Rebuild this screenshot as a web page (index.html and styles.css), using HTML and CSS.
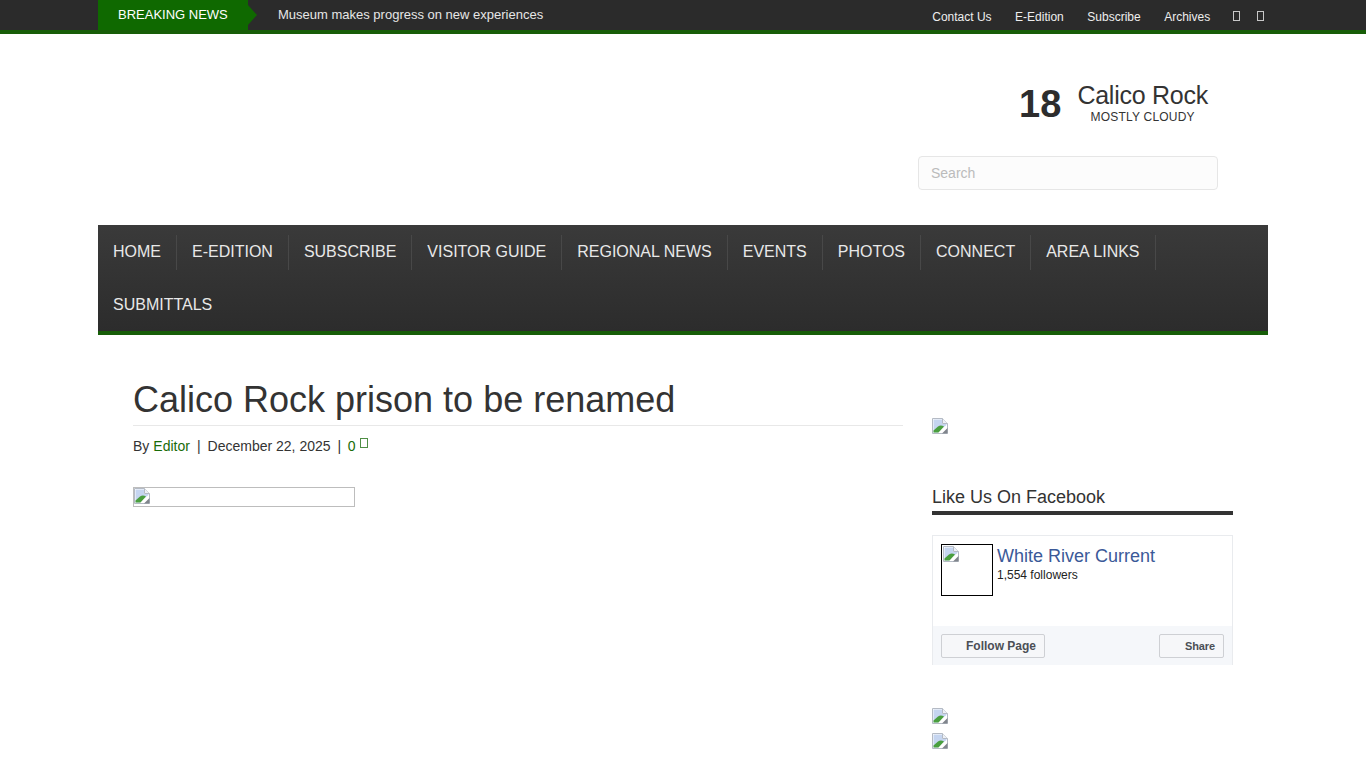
FILE: index.html
```html
<!DOCTYPE html>
<html lang="en">
<head>
  <meta charset="UTF-8" />
  <title>Calico Rock prison to be renamed</title>
  <link rel="stylesheet" href="styles.css">
</head>
<body>
  <svg class="defs" width="0" height="0" aria-hidden="true">
    <symbol id="broken" viewBox="0 0 16 16">
      <path d="M0.5 0.5H10.5L15.5 5.5V15.5H0.5Z" fill="#fff" stroke="#b4bac4"/>
      <path d="M1.5 1.5H10V6H14.5V7L8 12L6 14.5H1.5Z" fill="#c5d5f0"/>
      <path d="M1.5 14.5V12.5L6 8.5C8 7.2 10 7.4 12 8.5L6.5 14.5Z" fill="#4a9f3f"/>
      <path d="M10.5 0.5V5.5H15.5" fill="#eef1f6" stroke="#b4bac4"/>
      <path d="M10 15.5L15.5 10V15.5Z" fill="#80858c"/>
    </symbol>
  </svg>

  <!-- barra superiore -->
  <div class="topbar">
    <div class="wrap topbar-row">
      <div class="breaking">BREAKING NEWS</div>
      <div class="ticker">Museum makes progress on new experiences</div>
      <ul class="toplinks">
        <li><a href="#">Contact Us</a></li>
        <li><a href="#">E-Edition</a></li>
        <li><a href="#">Subscribe</a></li>
        <li><a href="#">Archives</a></li>
        <li class="tofu-item"><span class="tofu"></span></li>
        <li class="tofu-item"><span class="tofu"></span></li>
      </ul>
    </div>
  </div>

  <!-- testata -->
  <header class="wrap masthead">
    <div class="weather">
      <div class="temp">18</div>
      <div class="place">
        <div class="city">Calico Rock</div>
        <div class="sky">MOSTLY CLOUDY</div>
      </div>
    </div>
    <input class="search" type="text" placeholder="Search">
  </header>

  <nav class="wrap mainnav">
    <a href="#">HOME</a>
    <a href="#">E-EDITION</a>
    <a href="#">SUBSCRIBE</a>
    <a href="#">VISITOR GUIDE</a>
    <a href="#">REGIONAL NEWS</a>
    <a href="#">EVENTS</a>
    <a href="#">PHOTOS</a>
    <a href="#">CONNECT</a>
    <a href="#">AREA LINKS</a>
    <a href="#" class="last">SUBMITTALS</a>
  </nav>

  <div class="wrap content">
    <main class="article">
      <h1>Calico Rock prison to be renamed</h1>
      <div class="meta">
        By <a href="#">Editor</a><span class="sep">|</span>December 22, 2025<span class="sep">|</span><a href="#">0</a><span class="tofu small"></span>
      </div>
      <div class="photo"><svg class="broken"><use href="#broken"/></svg></div>
    </main>

    <aside class="sidebar">
      <svg class="broken ad-top"><use href="#broken"/></svg>
      <h3 class="widget-title">Like Us On Facebook</h3>
      <div class="fb">
        <div class="fb-head">
          <div class="fb-pic"><svg class="broken"><use href="#broken"/></svg></div>
          <div>
            <a class="fb-name" href="#">White River Current</a>
            <div class="fb-count">1,554 followers</div>
          </div>
        </div>
        <div class="fb-foot">
          <button class="fb-btn follow">Follow Page</button>
          <button class="fb-btn share">Share</button>
        </div>
      </div>
      <svg class="broken ad-one"><use href="#broken"/></svg>
      <svg class="broken ad-two"><use href="#broken"/></svg>
    </aside>
  </div>
</body>
</html>
```

FILE: styles.css
```css
/* base */
body {
  margin: 0;
  background: #fff;
  color: #333;
  font-family: "Liberation Sans", Arial, sans-serif;
  font-size: 14px;
  overflow: hidden;
}

a {
  text-decoration: none;
}

.defs {
  display: block;
  height: 0;
}

.wrap {
  width: 1170px;
  margin: 0 auto;
  box-sizing: border-box;
}

.broken {
  display: block;
  width: 16px;
  height: 16px;
}

.tofu {
  display: block;
  width: 5px;
  height: 8px;
  border: 1px solid #c8c8c8;
}

/* barra superiore */
.topbar {
  height: 30px;
  background: #2b2b2b;
  border-bottom: 4px solid #175d08;
}

.topbar-row {
  display: flex;
  height: 30px;
}

.breaking {
  position: relative;
  width: 150px;
  padding-left: 20px;
  box-sizing: border-box;
  background: #0f6900;
  color: #fff;
  font-size: 13px;
  line-height: 29px;
  height: 30px;
}

.breaking::after {
  content: "";
  position: absolute;
  left: 150px;
  top: 5px;
  border-left: 9px solid #0f6900;
  border-top: 10px solid transparent;
  border-bottom: 10px solid transparent;
}

.ticker {
  margin-left: 30px;
  color: #e6e6e6;
  font-size: 13px;
  line-height: 30px;
}

.toplinks {
  display: flex;
  list-style: none;
  margin: 0 4px 0 auto;
  padding: 0;
  gap: 23.5px;
  align-items: center;
  height: 31px;
}

.toplinks a {
  color: #eee;
  font-size: 12px;
}

.tofu-item {
  margin-left: -0.7px;
}

.tofu-item + .tofu-item {
  margin-left: -6.5px;
}

/* testata */
.masthead {
  height: 191px;
  display: flex;
  flex-direction: column;
  align-items: flex-end;
  padding-right: 50px;
}

.weather {
  display: flex;
  align-items: flex-start;
  margin-top: 47px;
  margin-right: 10px;
}

.temp {
  font-size: 38px;
  font-weight: bold;
  line-height: 47px;
  margin-right: 16px;
  color: #2d2d2d;
}

.city {
  font-size: 25px;
  line-height: 29px;
  letter-spacing: -0.25px;
  color: #333;
}

.sky {
  font-size: 12px;
  line-height: 14px;
  text-align: center;
  letter-spacing: 0.2px;
}

.search {
  width: 300px;
  height: 34px;
  margin-top: 28px;
  padding: 0 12px;
  box-sizing: border-box;
  background: #fcfcfc;
  border: 1px solid #e6e6e6;
  border-radius: 4px;
  font-family: inherit;
  font-size: 14px;
}

.search::placeholder {
  color: #bbb;
}

/* menu principale */
.mainnav {
  display: flex;
  flex-wrap: wrap;
  background: linear-gradient(#3a3a3a, #2c2c2c);
  border-bottom: 4px solid #175d08;
  height: 110px;
}

.mainnav a {
  position: relative;
  height: 53px;
  padding: 0 16px 0 15px;
  color: #e8e8e8;
  font-size: 16px;
  line-height: 53px;
}

.mainnav a::after {
  content: "";
  position: absolute;
  right: 0;
  top: 10px;
  height: 35px;
  width: 1px;
  background: #484848;
}

.mainnav a.last::after {
  display: none;
}

/* contenuto */
.content {
  display: flex;
  padding-left: 35px;
}

.article {
  width: 770px;
}

.article h1 {
  margin: 43px 0 0;
  padding-bottom: 3px;
  border-bottom: 1px solid #e8e8e8;
  font-size: 36px;
  font-weight: normal;
  line-height: 44px;
  color: #333;
}

.meta {
  display: flex;
  align-items: center;
  height: 20px;
  margin-top: 10px;
}

.meta a {
  color: #186b08;
  margin-left: 4px;
}

.meta .sep {
  margin: 0 7px;
}

.meta .sep + a {
  margin-left: -0.5px;
}

.tofu.small {
  width: 6px;
  height: 8px;
  margin: -7px 0 0 5px;
  border-color: #4f8f45;
}

.photo {
  width: 222px;
  height: 20px;
  margin-top: 31px;
  box-sizing: border-box;
  border: 1px solid #bdbdbd;
}

/* colonna laterale */
.sidebar {
  width: 301px;
  margin-left: 29px;
}

.ad-top {
  margin-top: 83px;
}

.widget-title {
  margin: 51px 0 0;
  padding-bottom: 2px;
  border-bottom: 4px solid #333;
  font-size: 18px;
  font-weight: normal;
  line-height: 24px;
  height: 24px;
  color: #333;
}

.fb {
  margin-top: 20px;
  border: 1px solid #e9ebee;
  border-bottom: 0;
  box-sizing: border-box;
  height: 130px;
  display: flex;
  flex-direction: column;
  justify-content: space-between;
}

.fb-head {
  display: flex;
  padding: 8px 8px 0;
}

.fb-pic {
  width: 52px;
  height: 52px;
  box-sizing: border-box;
  border: 1px solid #000;
  margin-right: 4px;
  padding: 1px;
}

.fb-name {
  display: block;
  color: #3b5998;
  font-size: 18px;
  line-height: 22px;
  margin-top: 1px;
}

.fb-count {
  color: #222;
  font-size: 12px;
  line-height: 16px;
}

.fb-foot {
  display: flex;
  justify-content: space-between;
  padding: 8px 8px 7px;
  background: #f5f7fa;
}

.fb-btn {
  height: 24px;
  padding: 0 8px 0 0;
  text-align: right;
  background: #f6f7f9;
  border: 1px solid #ced0d4;
  border-radius: 2px;
  color: #4b4f56;
  font-family: inherit;
  font-weight: bold;
}

.follow {
  width: 104px;
  font-size: 12px;
}

.share {
  width: 65px;
  font-size: 11px;
  letter-spacing: -0.1px;
}

.ad-one {
  margin-top: 43px;
}

.ad-two {
  margin-top: 9px;
}
```
